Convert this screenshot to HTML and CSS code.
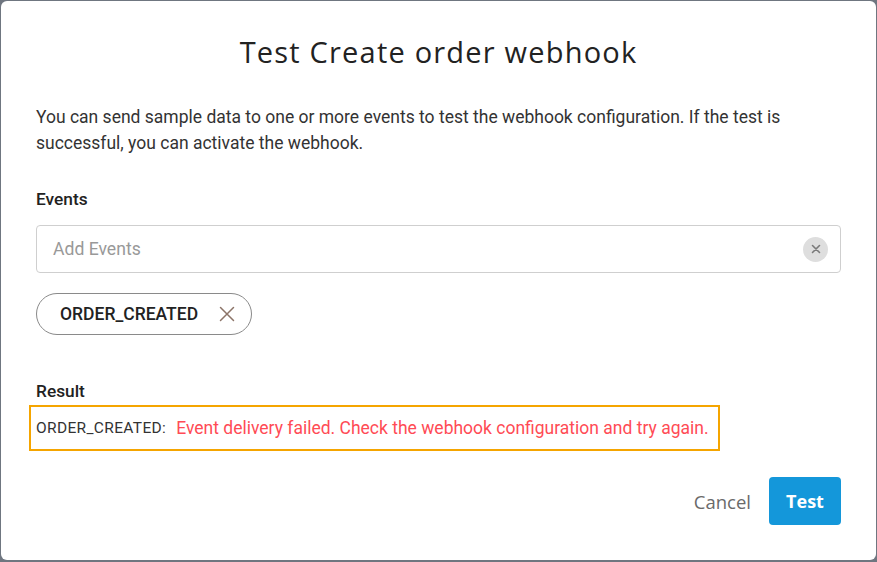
FILE: index.html
```html
<!DOCTYPE html>
<html>
<head>
<meta charset="utf-8">
<link rel="stylesheet" href="styles.css">
</head>
<body>
<div class="dialog">
  <h1 class="title">Test Create order webhook</h1>
  <p class="intro">You can send sample data to one or more events to test the webhook configuration. If the test is successful, you can activate the webhook.</p>
  <div class="label">Events</div>
  <div class="input">
    <span class="placeholder">Add Events</span>
    <span class="clear"><svg width="10" height="10" viewBox="0 0 10 10"><path d="M1.5 1.5L8.5 8.5M8.5 1.5L1.5 8.5" stroke="#7a7a7a" stroke-width="1.6" stroke-linecap="round"/></svg></span>
  </div>
  <div class="chips">
    <span class="chip">ORDER_CREATED
      <svg class="chip-x" width="16" height="16" viewBox="0 0 16 16"><path d="M1.5 1.5L14.5 14.5M14.5 1.5L1.5 14.5" stroke="#8c7468" stroke-width="1.5" stroke-linecap="round"/></svg>
    </span>
  </div>
  <div class="label result-label">Result</div>
  <div class="result">
    <span class="event">ORDER_CREATED:</span>
    <span class="error">Event delivery failed. Check the webhook configuration and try again.</span>
  </div>
  <div class="actions">
    <button class="btn-cancel">Cancel</button>
    <button class="btn-test">Test</button>
  </div>
</div>
</body>
</html>
```

FILE: styles.css
```css
html, body {
  margin: 0;
  padding: 0;
  height: 100%;
}
body {
  background: #6f7680;
  padding: 1px 1px 2px 1px;
  box-sizing: border-box;
}
.dialog {
  background: #fff;
  border-radius: 6px;
  height: 559px;
  box-sizing: border-box;
  padding: 0 35px 0 35px;
  font-family: Roboto, "Liberation Sans", sans-serif;
  color: #2b2b2b;
  display: flex;
  flex-direction: column;
}
.title {
  margin: 32px 0 0 0;
  font-family: "Open Sans", sans-serif;
  font-weight: 400;
  font-size: 29px;
  line-height: 38px;
  letter-spacing: 1.2px;
  text-align: center;
  color: #222;
}
.intro {
  margin: 33px 0 0 0;
  font-size: 17.5px;
  line-height: 26px;
  color: #333;
}
.label {
  margin-top: 33px;
  font-size: 17.3px;
  font-weight: 500;
  line-height: 20px;
  color: #222;
}
.input {
  margin-top: 16px;
  height: 48px;
  border: 1px solid #cfcfcf;
  border-radius: 4px;
  box-sizing: border-box;
  display: flex;
  align-items: center;
  justify-content: space-between;
  padding: 0 12px 0 16px;
}
.placeholder {
  color: #999;
  font-size: 17.6px;
}
.clear {
  width: 25px;
  height: 25px;
  border-radius: 50%;
  background: #dedede;
  display: flex;
  align-items: center;
  justify-content: center;
}
.chips {
  margin-top: 20px;
  display: flex;
}
.chip {
  height: 42px;
  box-sizing: border-box;
  border: 1px solid #8a8a8a;
  border-radius: 21px;
  display: flex;
  align-items: center;
  padding: 0 16px 0 23px;
  font-size: 17.5px;
  font-weight: 500;
  color: #222;
  gap: 21px;
}
.result-label {
  margin-top: 46px;
}
.result {
  margin: 4px 0 0 -7px;
  align-self: flex-start;
  border: 2px solid #f5a500;
  height: 46px;
  box-sizing: border-box;
  display: flex;
  align-items: center;
  padding: 0 9px 0 5px;
  gap: 10px;
}
.event {
  font-family: Roboto, sans-serif;
  font-size: 15.5px;
  letter-spacing: 0.35px;
  color: #333;
}
.error {
  color: #ff4b55;
  font-size: 17.5px;
}
.actions {
  margin: 26px 0 0 0;
  display: flex;
  justify-content: flex-end;
  align-items: center;
  gap: 18px;
}
.btn-cancel {
  background: none;
  border: none;
  font-family: "Open Sans", sans-serif;
  font-size: 18.5px;
  color: #6a6a6a;
  padding: 0;
}
.btn-test {
  background: #1497da;
  border: none;
  border-radius: 4px;
  width: 72px;
  height: 48px;
  color: #fff;
  font-family: "Open Sans", sans-serif;
  font-size: 18px;
  font-weight: 700;
}
```
